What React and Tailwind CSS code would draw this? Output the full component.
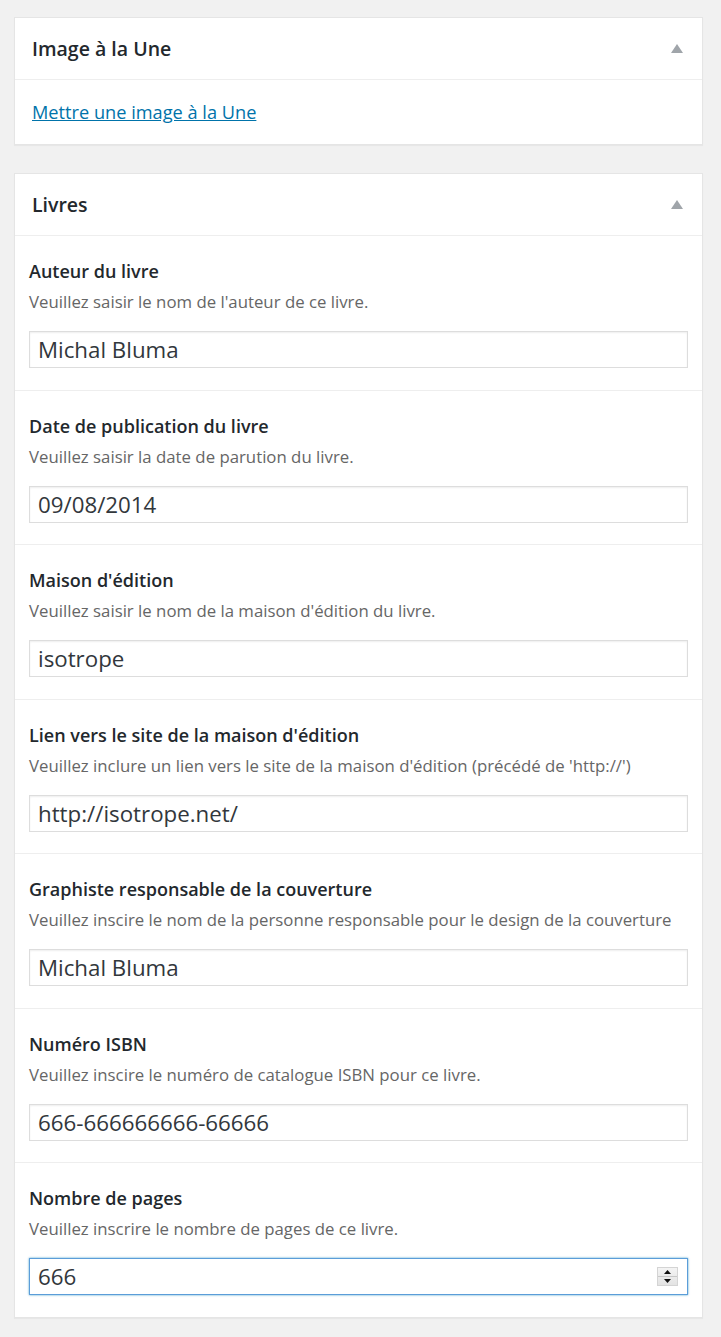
import React from "react";

const fields = [
  { label: "Auteur du livre", desc: "Veuillez saisir le nom de l'auteur de ce livre.", value: "Michal Bluma" },
  { label: "Date de publication du livre", desc: "Veuillez saisir la date de parution du livre.", value: "09/08/2014" },
  { label: "Maison d'édition", desc: "Veuillez saisir le nom de la maison d'édition du livre.", value: "isotrope" },
  { label: "Lien vers le site de la maison d'édition", desc: "Veuillez inclure un lien vers le site de la maison d'édition (précédé de 'http://')", value: "http://isotrope.net/" },
  { label: "Graphiste responsable de la couverture", desc: "Veuillez inscire le nom de la personne responsable pour le design de la couverture", value: "Michal Bluma" },
  { label: "Numéro ISBN", desc: "Veuillez inscire le numéro de catalogue ISBN pour ce livre.", value: "666-666666666-66666" },
  { label: "Nombre de pages", desc: "Veuillez inscrire le nombre de pages de ce livre.", value: "666", focus: true },
];

function Toggle() {
  return (
    <svg width="12" height="9" viewBox="0 0 12 9" className="block">
      <polygon points="6,0 12,9 0,9" fill="#a0a5aa" />
    </svg>
  );
}

function Header({ title }) {
  return (
    <div className="flex items-center justify-between h-[62px] pl-[17px] pr-[19px] border-b border-[#eeeeee]">
      <h2 className="text-[19.5px] font-semibold text-[#23282d] leading-none">{title}</h2>
      <Toggle />
    </div>
  );
}

function Spinner() {
  return (
    <div className="absolute right-[10px] top-[9px] w-[21px] h-[19px] flex flex-col border border-[#d4d4d4] bg-gradient-to-b from-[#f4f4f4] to-[#e3e3e3]">
      <div className="flex-1 flex items-center justify-center border-b border-[#c8c8c8]">
        <svg width="7" height="4" viewBox="0 0 7 4"><polygon points="3.5,0 7,4 0,4" fill="#111" /></svg>
      </div>
      <div className="flex-1 flex items-center justify-center">
        <svg width="7" height="4" viewBox="0 0 7 4"><polygon points="0,0 7,0 3.5,4" fill="#111" /></svg>
      </div>
    </div>
  );
}

function Field({ f, last }) {
  return (
    <div className={`px-[14px] pt-[23px] pb-[21.5px] ${last ? "" : "border-b border-[#eeeeee]"}`}>
      <div className="text-[18px] font-semibold text-[#23282d] leading-[24px] whitespace-nowrap">{f.label}</div>
      <div className="text-[16.8px] text-[#666666] leading-[22px] mt-[8px] whitespace-nowrap">{f.desc}</div>
      <div className="relative mt-[18px]">
        <input
          readOnly
          value={f.value}
          className={`block w-full h-[37px] px-[8px] text-[22.3px] text-[#32373c] bg-white outline-none ${
            f.focus
              ? "border border-[#5b9dd9] shadow-[0_0_2px_rgba(30,140,190,0.8)]"
              : "border border-[#dddddd] shadow-[inset_0_1px_2px_rgba(0,0,0,0.07)]"
          }`}
          style={{ fontFamily: "'Open Sans', sans-serif" }}
        />
        {f.focus && <Spinner />}
      </div>
    </div>
  );
}

export default function App() {
  return (
    <div className="min-h-[1337px] bg-[#f1f1f1] pt-[17px] pb-[20px]" style={{ fontFamily: "'Open Sans', sans-serif" }}>
      <div className="ml-[14px] w-[689px] bg-white border border-[#e5e5e5] shadow-[0_1px_1px_rgba(0,0,0,0.04)]">
        <Header title="Image à la Une" />
        <div className="pl-[17px] pt-[20px] pb-[20px]">
          <a href="#" className="block w-max text-[18.2px] leading-[24px] text-[#0073aa] underline">Mettre une image à la Une</a>
        </div>
      </div>
      <div className="ml-[14px] mt-[28px] w-[689px] bg-white border border-[#e5e5e5] shadow-[0_1px_1px_rgba(0,0,0,0.04)]">
        <Header title="Livres" />
        {fields.map((f, i) => (
          <Field key={i} f={f} last={i === fields.length - 1} />
        ))}
      </div>
    </div>
  );
}
